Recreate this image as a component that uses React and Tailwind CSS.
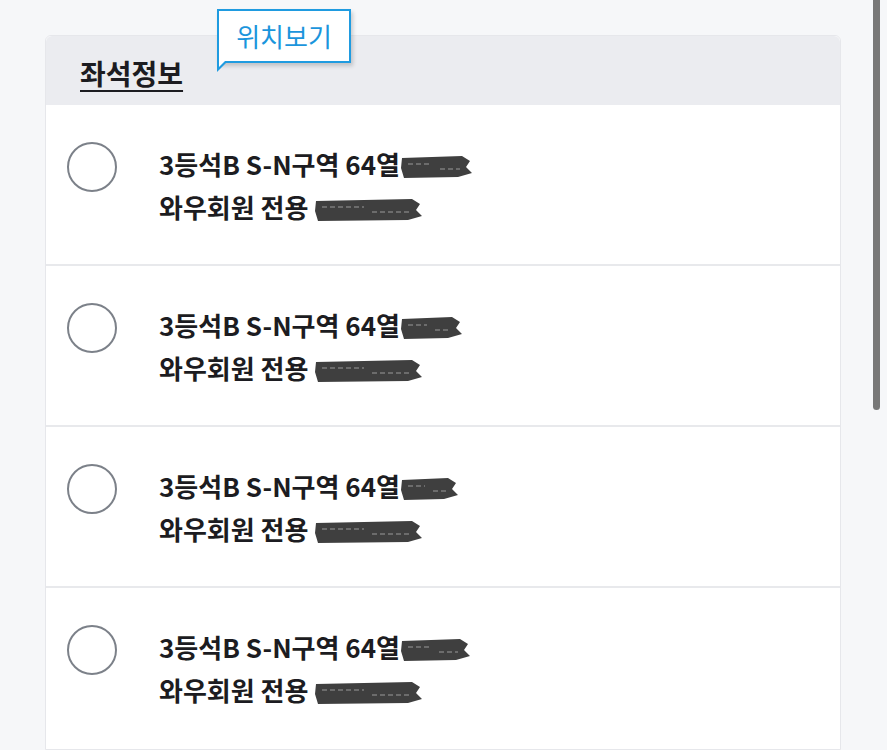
import React from "react";

const ROWS = [
  { id: 1, w1: 72, w2: 108 },
  { id: 2, w1: 62, w2: 108 },
  { id: 3, w1: 58, w2: 108 },
  { id: 4, w1: 70, w2: 108 },
];

function Scribble({ w }) {
  return (
    <svg width={w} height="26" viewBox={`0 0 ${w} 26`} className="inline-block align-[-4px]">
      <path
        d={`M2 5 L${w - 10} 3 L${w - 2} 8 L${w - 6} 14 L${w} 20 L${w - 14} 24 L4 25 L1 15 Z`}
        fill="#3f3f3f"
      />
      <path d={`M8 11 H${w / 2 - 4} M${w / 2 + 4} 16 H${w - 12}`} stroke="#9a9a9a" strokeWidth="1.2" strokeDasharray="5 3" />
    </svg>
  );
}

export default function App() {
  return (
    <div className="relative min-h-[750px] overflow-hidden bg-[#f6f7f9] font-['Noto_Sans_CJK_KR','Noto_Sans',sans-serif] text-[#1c1c21]">
      <div className="pl-[45px] pt-[35px]">
        <div className="relative w-[796px] rounded-t-[6px] border border-[#e6e7eb] bg-white">
          <div className="h-[69px] rounded-t-[6px] bg-[#ebecf0] pl-[34px] pt-[21px]">
            <span className="text-[28px] font-bold leading-[32px] underline decoration-[2px] underline-offset-[5px]">좌석정보</span>
          </div>

          <div className="absolute left-[171px] top-[-27px] h-[54px] w-[134px] border-2 border-[#1f9be0] bg-white shadow-[2px_3px_4px_rgba(0,0,0,0.18)]">
            <div className="flex h-full items-center justify-center text-[26px] leading-none text-[#1b95dc]">위치보기</div>
            <svg className="absolute left-[-2px] top-[50px]" width="12" height="12" viewBox="0 0 12 12">
              <path d="M0 0 L11 0 L0 11 Z" fill="#1f9be0" />
              <path d="M2 0 L8 0 L2 6 Z" fill="white" />
            </svg>
          </div>

          {ROWS.map((r, i) => (
            <div
              key={r.id}
              className={`flex h-[161px] items-start gap-[42px] pl-[21px] pt-[37px] ${i < ROWS.length - 1 ? "border-b-2 border-[#e8e9ec]" : ""}`}
            >
              <div className="h-[50px] w-[50px] shrink-0 rounded-full border-2 border-[#7c8189]" />
              <div className="text-[26px] font-bold leading-[43px]">
                <div>
                  3등석B S-N구역 64열
                  <Scribble w={r.w1} />
                </div>
                <div>
                  와우회원 전용 <Scribble w={r.w2} />
                </div>
              </div>
            </div>
          ))}
        </div>
      </div>
      <div className="absolute right-[7px] top-0 h-[410px] w-[7px] rounded-b-full bg-[#787878]" />
    </div>
  );
}
